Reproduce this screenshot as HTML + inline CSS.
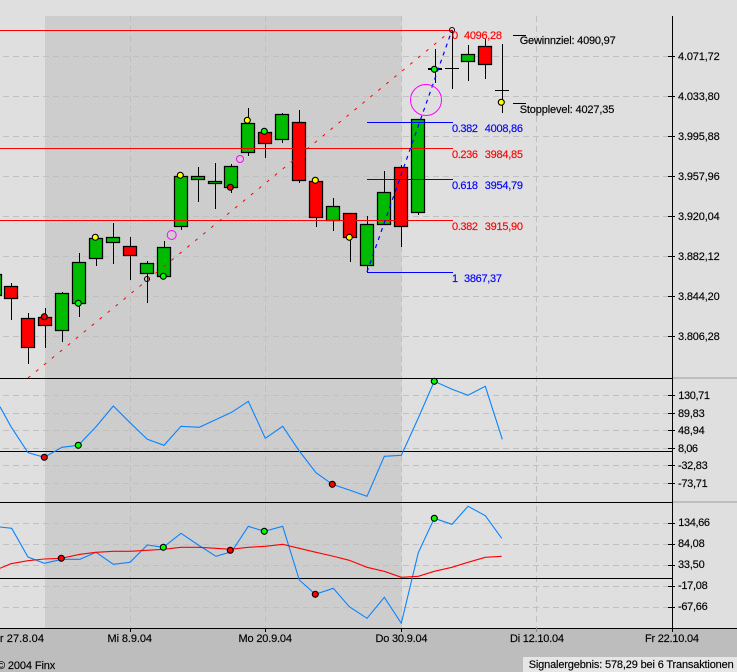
<!DOCTYPE html>
<html><head><meta charset="utf-8"><style>
html,body{margin:0;padding:0;background:#dfdfdf;width:737px;height:672px;overflow:hidden}
svg{display:block}
text{font-family:"Liberation Sans",Arial,sans-serif;font-size:11px;fill:#000;stroke:#000;stroke-width:.15}
.r{fill:#f00;stroke:#f00}.b{fill:#00f;stroke:#00f}
</style></head><body>
<svg width="737" height="672" viewBox="0 0 737 672" xmlns="http://www.w3.org/2000/svg">
<defs><pattern id="d" width="4" height="4" patternUnits="userSpaceOnUse"><rect width="4" height="4" fill="#cecece"/><rect x="1" y="1" width="1" height="1" fill="#c7c7c7"/><rect x="3" y="3" width="1" height="1" fill="#c7c7c7"/></pattern></defs>
<rect width="737" height="672" fill="#dfdfdf"/>
<rect x="45" y="16" width="356.5" height="612" fill="url(#d)"/>
<rect x="0" y="629" width="737" height="43" fill="#bdbdbd"/>
<rect x="523" y="657" width="214" height="15" fill="#e6e6e6"/>

<g stroke="#c0c0c0" fill="none" stroke-dasharray="6 4" shape-rendering="crispEdges">
<path d="M3 56.5H672M3 96.5H672M3 136.5H672M3 176.5H672M3 216.5H672M3 256.5H672M3 296.5H672M3 336.5H672"/>
<path d="M3 395.5H672M3 413.5H672M3 430.5H672M3 448.5H672M3 465.5H672M3 483.5H672"/>
<path d="M3 523.5H672M3 544.5H672M3 565.5H672M3 586.5H672M3 607.5H672"/>
<path d="M130.5 16V628M265.5 16V628M401.5 16V628M536.5 16V628"/>
</g>

<g stroke="#bdbdbd" fill="none" shape-rendering="crispEdges" stroke-width="2">
<path d="M672 378H737M672 502H737"/>
</g>

<!-- wicks -->
<g stroke="#000" fill="none" shape-rendering="crispEdges">
<path d="M11.5 283V320M28.5 313V364M45.5 308V348M62.5 292V342M79.5 253V317M96.5 238V266M113.5 223V264M130.5 237V280M147.5 261V303M164.5 241V276M181.5 176V230M198.5 167V202M215.5 163V209M231.5 164V193M248.5 108V156M265.5 132V158M282.5 113V143M299.5 110V183M316.5 181V227M333.5 198V231M350.5 213V262M367.5 216V272M384.5 171V224M401.5 165V247M418.5 119V215M435.5 49V83M452.5 30V89M468.5 45V81M485.5 39V79M502.5 44V113"/>
<path d="M445 68.5H459M495 90.5H509M513 35.5H526M513 103.5H526"/>
<path d="M428 69H442" stroke-width="2"/>
</g>

<!-- bodies -->
<g stroke="#000" stroke-width="1.25">
<g fill="#00bb00">
<rect x="-11.5" y="274.5" width="13" height="21"/>
<rect x="55.5" y="293.5" width="13" height="37"/>
<rect x="72.5" y="262.5" width="13" height="41"/>
<rect x="89.5" y="238.5" width="13" height="20"/>
<rect x="106.5" y="237.5" width="13" height="5"/>
<rect x="140.5" y="263.5" width="13" height="10"/>
<rect x="157.5" y="247.5" width="13" height="29"/>
<rect x="174.5" y="176.5" width="13" height="50"/>
<rect x="191.5" y="176.5" width="13" height="3"/>
<rect x="208.5" y="181.5" width="13" height="2"/>
<rect x="224.5" y="166.5" width="13" height="21"/>
<rect x="241.5" y="123.5" width="13" height="29"/>
<rect x="275.5" y="114.5" width="13" height="25"/>
<rect x="326.5" y="206.5" width="13" height="14"/>
<rect x="360.5" y="224.5" width="13" height="41"/>
<rect x="377.5" y="192.5" width="13" height="32"/>
<rect x="411.5" y="119.5" width="13" height="93"/>
<rect x="461.5" y="54.5" width="13" height="7"/>
</g>
<g fill="#ff0000">
<rect x="4.5" y="286.5" width="13" height="12"/>
<rect x="21.5" y="318.5" width="13" height="29"/>
<rect x="38.5" y="317.5" width="13" height="8"/>
<rect x="123.5" y="246.5" width="13" height="9"/>
<rect x="258.5" y="132.5" width="13" height="11"/>
<rect x="292.5" y="122.5" width="13" height="58"/>
<rect x="309.5" y="181.5" width="13" height="36"/>
<rect x="343.5" y="213.5" width="13" height="24"/>
<rect x="394.5" y="167.5" width="13" height="59"/>
<rect x="478.5" y="46.5" width="13" height="18"/>
</g>
</g>

<!-- horizontal levels -->
<g fill="none" shape-rendering="crispEdges">
<path stroke="#f00" d="M0 30.5H453M0 148.5H453M0 220.5H453"/>
<path stroke="#00f" d="M367 122.5H453M367 179.5H453M367 272.5H453"/>
<path stroke="#000" d="M0 378.5H672M0 451.5H672M0 502.5H672M0 578.5H672M0 628.5H737M672.5 16V629"/>
<path stroke="#000" d="M668 56.5H675M668 96.5H675M668 136.5H675M668 176.5H675M668 216.5H675M668 256.5H675M668 296.5H675M668 336.5H675M668 395.5H675M668 413.5H675M668 430.5H675M668 448.5H675M668 465.5H675M668 483.5H675M668 523.5H675M668 544.5H675M668 565.5H675M668 586.5H675M668 607.5H675M130.5 628V632M265.5 628V632M401.5 628V632M672.5 628V632"/>
<path stroke="#8a8a8a" d="M536.5 628V632"/>
</g>

<!-- dashed trends -->
<path d="M28 378L452 30" stroke="#f00" stroke-dasharray="3 7.3" fill="none"/>
<path d="M367 272L452 30" stroke="#00f" stroke-width="1.2" stroke-dasharray="4 4.5" fill="none"/>

<!-- magenta circles -->
<g fill="none" stroke="#ff00ff">
<circle cx="426" cy="100" r="15.5"/>
<circle cx="171.7" cy="235" r="4.5"/>
<circle cx="240" cy="159" r="3.5"/>
</g>
<g fill="none" stroke="#000">
<circle cx="147" cy="279" r="2.5"/>
<circle cx="452" cy="30" r="2.5"/>
</g>

<!-- indicator lines -->
<polyline fill="none" stroke="#0a84ff" stroke-width="1.1" points="0,406.7 11,426.7 28,452.7 44.3,457.3 62,447.3 78.3,445.3 96,426.7 113.3,406 130,422.7 147.3,439.3 164,445.3 181,426.3 199.3,427.3 215,420 231.7,412.3 248.3,401.3 265.3,438.3 282.7,426.3 299.3,451 316,472.7 332.3,484.3 349.3,490 367,496.3 384.3,456.3 401.3,455.3 418.3,418 434.3,381.3 452,389.3 468,395.3 485.3,386.3 502.3,439.3"/>
<polyline fill="none" stroke="#0a84ff" stroke-width="1.1" points="0,527 11.7,528.3 28,557 44.3,563.3 62,559.3 80,559.3 96,552.3 113.3,564.3 130,562.3 147.3,545 163.3,547.3 181,533.3 198.3,545 216,556.3 231.7,551.7 248.3,526.3 264.3,531.3 282.7,526.3 299.3,580 315.3,594.3 333.3,588.3 349.3,606.7 367,618.3 384.3,597.3 401.3,623.3 418.3,552.7 434.3,518.3 452,524.3 468,506.3 485.3,515.7 501.7,538.3"/>
<polyline fill="none" stroke="#f00" stroke-width="1.1" points="0,568.3 11,563.7 28,560.7 44.3,559 61.3,558.3 80,554.3 96,552.3 113.3,551.3 130,551.3 147.3,550.3 163.3,549.3 181,547.3 198.3,547.3 216,548.3 230.3,549.3 248.3,547.3 265.3,546.3 282.7,544.3 299.3,548.3 316,552.3 332.3,556 349.3,560.3 367,567.3 384.3,571.3 401.3,577.3 418.3,576.3 434.3,571.3 452,567.3 468,562.3 485.3,557.3 501.7,556.3"/>

<!-- markers -->
<g stroke="#000" stroke-width="1.1">
<g fill="#ffff00">
<circle cx="95.3" cy="237.3" r="3"/><circle cx="180.3" cy="175.3" r="3"/><circle cx="247.3" cy="120.3" r="3"/><circle cx="315.3" cy="180.3" r="3"/><circle cx="349.3" cy="237.3" r="3"/><circle cx="501.3" cy="102.3" r="3"/>
</g>
<g fill="#00ff00">
<circle cx="78.3" cy="303.3" r="3"/><circle cx="163.3" cy="276.3" r="3"/><circle cx="264.3" cy="131.3" r="3"/><circle cx="434.3" cy="69.3" r="3"/>
<circle cx="78.3" cy="445.3" r="3"/><circle cx="434.3" cy="381.3" r="3"/><circle cx="163.3" cy="547.3" r="3"/><circle cx="264.3" cy="531.3" r="3"/><circle cx="434.3" cy="518.3" r="3"/>
</g>
<g fill="#ff0000">
<circle cx="44.3" cy="316.7" r="3"/><circle cx="230.3" cy="187.3" r="3"/>
<circle cx="44.3" cy="457.3" r="3"/><circle cx="332.3" cy="484.3" r="3"/><circle cx="61.3" cy="558.3" r="3"/><circle cx="230.3" cy="550.3" r="3"/><circle cx="315.3" cy="594.3" r="3"/>
</g>
</g>

<!-- labels -->
<text x="519.7" y="44" textLength="96">Gewinnziel: 4090,97</text>
<text x="519.7" y="113" textLength="94.7">Stopplevel: 4027,35</text>
<text class="r" x="452" y="39">0</text><text class="r" x="464" y="39" textLength="38">4096,28</text>
<text class="b" x="452" y="132" textLength="26">0.382</text><text class="b" x="484.7" y="132" textLength="38.3">4008,86</text>
<text class="r" x="452" y="158" textLength="26">0.236</text><text class="r" x="484.7" y="158" textLength="38.3">3984,85</text>
<text class="b" x="452" y="189" textLength="26">0.618</text><text class="b" x="484.7" y="189" textLength="38.3">3954,79</text>
<text class="r" x="452" y="230" textLength="26">0.382</text><text class="r" x="484.7" y="230" textLength="38.3">3915,90</text>
<text class="b" x="452" y="282">1</text><text class="b" x="464" y="282" textLength="38">3867,37</text>

<g>
<text x="678" y="60" textLength="41.7">4.071,72</text>
<text x="678" y="100" textLength="41.7">4.033,80</text>
<text x="678" y="140" textLength="41.7">3.995,88</text>
<text x="678" y="180" textLength="41.7">3.957,96</text>
<text x="678" y="220" textLength="41.7">3.920,04</text>
<text x="678" y="260" textLength="41.7">3.882,12</text>
<text x="678" y="300" textLength="41.7">3.844,20</text>
<text x="678" y="340" textLength="41.7">3.806,28</text>
<text x="678.3" y="399" textLength="31.7">130,71</text>
<text x="678" y="417" textLength="26.7">89,83</text>
<text x="678" y="434" textLength="26.7">48,94</text>
<text x="678" y="452" textLength="20">8,06</text>
<text x="678" y="469" textLength="29.7">-32,83</text>
<text x="678" y="487" textLength="29.7">-73,71</text>
<text x="678.3" y="526" textLength="31.7">134,66</text>
<text x="678" y="547" textLength="26.7">84,08</text>
<text x="678" y="568" textLength="26.7">33,50</text>
<text x="678" y="589" textLength="29.7">-17,08</text>
<text x="678" y="610" textLength="29.7">-67,66</text>
</g>

<text x="-7" y="642" textLength="51">Fr 27.8.04</text>
<text x="107.5" y="642" textLength="44.5">Mi 8.9.04</text>
<text x="238.5" y="642" textLength="53.5">Mo 20.9.04</text>
<text x="375.5" y="642" textLength="52">Do 30.9.04</text>
<text x="510" y="642" textLength="54">Di 12.10.04</text>
<text x="645" y="642" textLength="54">Fr 22.10.04</text>
<text x="-3" y="669" textLength="58.3">© 2004 Finx</text>
<text x="528.7" y="668" textLength="205">Signalergebnis: 578,29 bei 6 Transaktionen</text>
</svg>
</body></html>
